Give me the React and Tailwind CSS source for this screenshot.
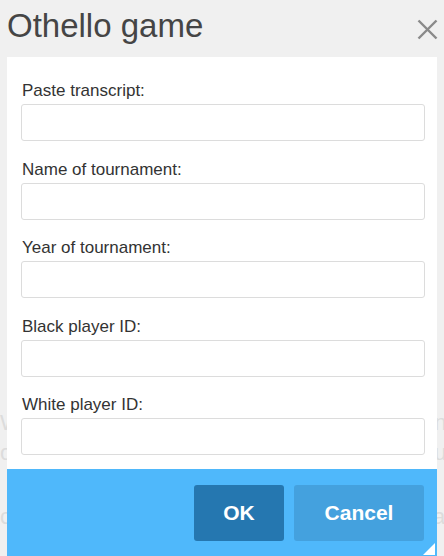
const fields = [
  "Paste transcript:",
  "Name of tournament:",
  "Year of tournament:",
  "Black player ID:",
  "White player ID:",
];

export default function App() {
  return (
    <div className="relative w-[444px] h-[556px] overflow-hidden bg-[#f0f0f0] font-['Liberation_Sans',Arial,sans-serif]">
      {/* page content behind the dialog */}
      <div className="pt-[408px] text-[22px] leading-[30px] text-[#dcdcdc] whitespace-nowrap">
        <p>White player nnnnnnnnnnnnnnnnnnnnnnnnnnnnnnnnnnnnn</p>
        <p>o uuuuuuuuuuuuuuuuuuuuuuuuuuuuuuuuuuuuuuuuu</p>
        <p className="mt-[34px]">c aaaaaaaaaaaaaaaaaaaaaaaaaaaaaaaaaaaaaaaaa</p>
      </div>

      {/* dialog */}
      <div className="absolute inset-0 flex flex-col">
        <div className="h-[57px] shrink-0 bg-[#f0f0f0] flex items-start justify-between pl-[7px] pr-[6px]">
          <h1 className="mt-[7px] text-[33px] leading-[38px] text-[#454545]">Othello game</h1>
          <button className="mt-[19px]">
            <svg width="21" height="21" viewBox="0 0 21 21">
              <path d="M1.5 1.5 L19.5 19.5 M19.5 1.5 L1.5 19.5" stroke="#8a8a8a" strokeWidth="2.4" />
            </svg>
          </button>
        </div>

        <div className="mx-[7px] bg-white pt-[25px] pb-[14px] pl-[14px] pr-[12px] flex flex-col gap-[19.5px]">
          {fields.map((label) => (
            <div key={label} className="flex flex-col">
              <label className="pl-px text-[17px] leading-[18px] text-[#333]">{label}</label>
              <input className="mt-[4px] h-[37px] w-full border border-[#dcdcdc] rounded-[3px] outline-none" />
            </div>
          ))}
        </div>

        <div className="relative mx-[7px] flex-1 bg-[#4fb8fb] flex justify-end items-start gap-[10px] pt-[16px] pr-[13px]">
          <button className="w-[90px] h-[56px] rounded-[3px] bg-[#2577b0] text-white font-bold text-[21px]">
            OK
          </button>
          <button className="w-[130px] h-[56px] rounded-[3px] bg-[#44a1de] text-white font-bold text-[21px]">
            Cancel
          </button>
          <svg className="absolute right-[2px] bottom-px" width="12" height="12" viewBox="0 0 12 12">
            <path d="M12 0 L12 12 L0 12 Z" fill="#fff" />
          </svg>
        </div>
      </div>
    </div>
  );
}
